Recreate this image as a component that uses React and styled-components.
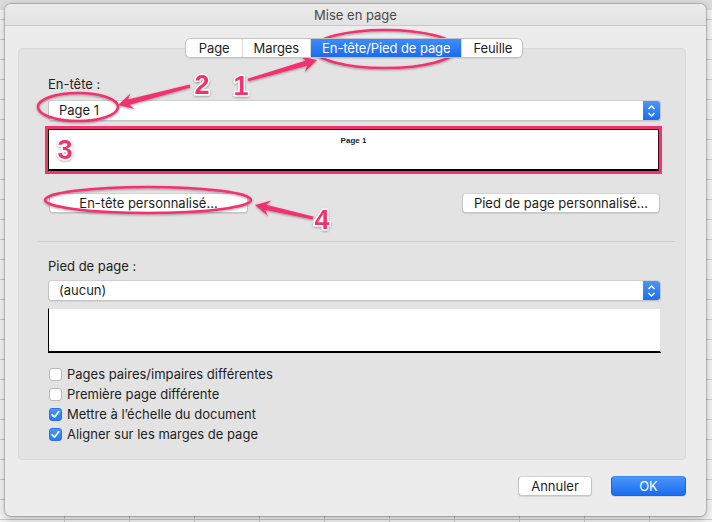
import React from "react";
import styled, { createGlobalStyle } from "styled-components";

const GlobalStyle = createGlobalStyle`
  html, body { margin: 0; padding: 0; }
  body {
    font-family: "Inter", "Liberation Sans", "Noto Sans", sans-serif;
    font-size: 13px;
    color: #1e1e1e;
  }
`;

const PINK = "#f2336e";

// arrow polygon from tail (x1,y1) to tip (x2,y2)
function arrowPoints(x1, y1, x2, y2) {
  const dx = x2 - x1;
  const dy = y2 - y1;
  const L = Math.hypot(dx, dy);
  const ux = dx / L, uy = dy / L;
  const nx = -uy, ny = ux;
  const hl = 15;
  const p = (a, b) => `${(x1 + ux * a + nx * b).toFixed(1)},${(y1 + uy * a + ny * b).toFixed(1)}`;
  return [
    p(0, 1.4),
    p(L - hl + 4, 2.8),
    p(L - hl, 8),
    p(L, 0),
    p(L - hl, -8),
    p(L - hl + 4, -2.8),
    p(0, -1.4),
  ].join(" ");
}

const ARROWS = [
  [248, 80, 317, 60],
  [190, 86, 118, 105],
  [313, 218, 255, 205],
];

const NUMBERS = [
  { n: "1", x: 241, y: 95 },
  { n: "2", x: 202, y: 94 },
  { n: "3", x: 65, y: 159 },
  { n: "4", x: 322, y: 229 },
];

const ELLIPSES = [
  { cx: 385, cy: 49, rx: 71, ry: 19 },
  { cx: 78, cy: 107, rx: 40, ry: 14 },
  { cx: 148, cy: 200, rx: 103, ry: 13 },
];

function Annotations() {
  return (
    <Overlay width="712" height="522" viewBox="0 0 712 522">
      <defs>
        <filter id="shadow" x="-20%" y="-20%" width="140%" height="140%">
          <feDropShadow dx="0" dy="1" stdDeviation="0.8" floodColor="#000" floodOpacity="0.35" />
        </filter>
      </defs>
      <g filter="url(#shadow)">
        {ELLIPSES.map((e, i) => (
          <ellipse key={i} {...e} fill="none" stroke={PINK} strokeWidth="2.6" />
        ))}
        {ARROWS.map((a, i) => (
          <polygon key={i} points={arrowPoints(...a)} fill={PINK} />
        ))}
        {NUMBERS.map(t => (
          <text
            key={t.n}
            x={t.x}
            y={t.y}
            textAnchor="middle"
            fontFamily="Liberation Sans, Arial, sans-serif"
            fontWeight="700"
            fontSize="27"
            fill={PINK}
            stroke="#fff"
            strokeWidth="3"
            paintOrder="stroke"
            strokeLinejoin="round"
          >
            {t.n}
          </text>
        ))}
      </g>
    </Overlay>
  );
}

function Stepper() {
  return (
    <StepBox>
      <svg width="9" height="14" viewBox="0 0 9 14">
        <path d="M1.5 5 L4.5 2 L7.5 5 M1.5 9 L4.5 12 L7.5 9" fill="none" stroke="#fff" strokeWidth="1.5" />
      </svg>
    </StepBox>
  );
}

function Select({ value }) {
  return (
    <SelectBox>
      <SelectValue>{value}</SelectValue>
      <Stepper />
    </SelectBox>
  );
}

function Check({ checked, label }) {
  return (
    <CheckRow>
      <Box checked={checked}>
        {checked && (
          <svg width="11" height="11" viewBox="0 0 11 11">
            <path d="M2.2 5.8 L4.5 8.2 L8.8 2.6" fill="none" stroke="#fff" strokeWidth="1.7" strokeLinecap="round" strokeLinejoin="round" />
          </svg>
        )}
      </Box>
      <span>{label}</span>
    </CheckRow>
  );
}

export default function App() {
  const tabs = ["Page", "Marges", "En-tête/Pied de page", "Feuille"];
  const options = [
    { label: "Pages paires/impaires différentes", checked: false },
    { label: "Première page différente", checked: false },
    { label: "Mettre à l’échelle du document", checked: true },
    { label: "Aligner sur les marges de page", checked: true },
  ];

  return (
    <>
      <GlobalStyle />
      <Page>
        <Dialog>
          <TitleBar>Mise en page</TitleBar>
          <Content>
            <Tabs>
              {tabs.map(t => (
                <Tab key={t} active={t === "En-tête/Pied de page"}>{t}</Tab>
              ))}
            </Tabs>
            <Panel>
              <Label>En-tête :</Label>
              <Field $top={8}>
                <Select value="Page 1" />
              </Field>
              <Preview $top={8} highlighted>
                <PreviewText>Page 1</PreviewText>
              </Preview>
              <ButtonRow>
                <PushButton $width={199}>En-tête personnalisé...</PushButton>
                <PushButton $width={198}>Pied de page personnalisé...</PushButton>
              </ButtonRow>
              <Separator />
              <Label $top={16}>Pied de page :</Label>
              <Field $top={6}>
                <Select value="(aucun)" />
              </Field>
              <Preview $top={7} />
              <CheckList>
                {options.map(o => (
                  <Check key={o.label} {...o} />
                ))}
              </CheckList>
            </Panel>
            <Footer>
              <PushButton $width={74}>Annuler</PushButton>
              <PushButton $width={75} primary>OK</PushButton>
            </Footer>
          </Content>
        </Dialog>
        <Annotations />
      </Page>
    </>
  );
}

const Page = styled.div`
  position: relative;
  width: 712px;
  height: 522px;
  box-sizing: border-box;
  padding: 4px 6px 6px 5px;
  overflow: hidden;
  background-color: #f4f4f4;
  background-image:
    linear-gradient(to bottom, #dcdcdc 0, #dcdcdc 10px, transparent 10px),
    repeating-linear-gradient(to right, transparent 0, transparent 64px, #c9c9c9 64px, #c9c9c9 65px),
    repeating-linear-gradient(to bottom, transparent 0, transparent 19px, #c9c9c9 19px, #c9c9c9 20px);
`;

const Overlay = styled.svg`
  position: absolute;
  top: 0;
  left: 0;
  pointer-events: none;
`;

const Dialog = styled.div`
  width: 701px;
  height: 512px;
  background: #ececec;
  border-radius: 6px;
  box-shadow: 0 0 0 1px rgba(0, 0, 0, 0.18), 0 3px 10px rgba(0, 0, 0, 0.25);
  overflow: hidden;
  display: flex;
  flex-direction: column;
`;

const TitleBar = styled.div`
  height: 21px;
  line-height: 22px;
  text-align: center;
  color: #4b4b4b;
  background: linear-gradient(#ebebeb, #e2e2e2);
  border-bottom: 1px solid #c8c8c8;
  flex-shrink: 0;
`;

const Content = styled.div`
  display: flex;
  flex-direction: column;
  padding: 0 20px 0 13px;
`;

const Tabs = styled.div`
  position: relative;
  z-index: 1;
  align-self: center;
  display: flex;
  height: 20px;
  margin: 12px 0 0 0;
  transform: translateX(2px);
  border: 1px solid #c4c4c4;
  border-radius: 5px;
  background: #fff;
  box-sizing: border-box;
  overflow: hidden;
  box-shadow: 0 1px 1px rgba(0, 0, 0, 0.08);
`;

const Tab = styled.div`
  padding: 0 11px;
  line-height: 18px;
  letter-spacing: -0.1px;
  color: ${({ active }) => (active ? "#fff" : "#1e1e1e")};
  background: ${({ active }) => (active ? "linear-gradient(#3f8cf8, #1a6cf0)" : "transparent")};
  border-left: 1px solid #dadada;
  &:first-child { border-left: 0; padding: 0 12px 0 13px; }
  &:last-child { padding: 0 10px 0 11px; }
`;

const Panel = styled.div`
  margin-top: -10px;
  height: 412px;
  box-sizing: border-box;
  padding: 27px 24px 14px 29px;
  background: #e3e3e3;
  border: 1px solid #dadada;
  border-radius: 4px;
  display: flex;
  flex-direction: column;
  & > * { flex-shrink: 0; }
`;

const Label = styled.div`
  line-height: 16px;
  margin-top: ${({ $top }) => $top || 0}px;
`;

const Field = styled.div`
  margin-top: ${({ $top }) => $top}px;
`;

const SelectBox = styled.div`
  height: 21px;
  box-sizing: border-box;
  display: flex;
  align-items: stretch;
  background: #fff;
  border: 1px solid #c3c3c3;
  border-top-color: #d0d0d0;
  border-radius: 4px;
  overflow: hidden;
  box-shadow: 0 1px 0 rgba(0, 0, 0, 0.06);
`;

const SelectValue = styled.div`
  flex: 1;
  padding-left: 10px;
  line-height: 19px;
`;

const StepBox = styled.div`
  width: 17px;
  display: flex;
  align-items: center;
  justify-content: center;
  background: linear-gradient(#4b96f9, #1b6ff1);
`;

const Preview = styled.div`
  margin-top: ${({ $top }) => $top}px;
  height: ${({ highlighted }) => (highlighted ? 42 : 45)}px;
  box-sizing: border-box;
  background: #fff;
  border-left: 1px solid #000;
  border-top: 1px solid ${({ highlighted }) => (highlighted ? "#3a0a1a" : "#e3e3e3")};
  border-right: 1px solid ${({ highlighted }) => (highlighted ? "#3a0a1a" : "#e3e3e3")};
  border-bottom: 2px solid #000;
  box-shadow: ${({ highlighted }) => (highlighted ? `0 0 0 3px ${PINK}` : "none")};
  margin-right: ${({ highlighted }) => (highlighted ? 2 : 0)}px;
  display: flex;
  justify-content: center;
`;

const PreviewText = styled.div`
  font-family: "Liberation Sans", Arial, sans-serif;
  font-size: 8px;
  font-weight: 700;
  color: #222;
  margin-top: 6px;
`;

const ButtonRow = styled.div`
  margin-top: 22px;
  display: flex;
  justify-content: space-between;
  padding-left: 1px;
  padding-right: 1px;
`;

const PushButton = styled.div`
  width: ${({ $width }) => $width}px;
  height: 20px;
  box-sizing: border-box;
  text-align: center;
  line-height: 18px;
  border-radius: 4px;
  color: ${({ primary }) => (primary ? "#fff" : "#1e1e1e")};
  background: ${({ primary }) => (primary ? "linear-gradient(#4b96f9, #1a6cf0)" : "#fff")};
  border: 1px solid ${({ primary }) => (primary ? "#1a66e0" : "#c5c5c5")};
  border-top-color: ${({ primary }) => (primary ? "#3f8af5" : "#d2d2d2")};
  box-shadow: 0 1px 1px rgba(0, 0, 0, 0.1);
`;

const Separator = styled.div`
  margin: 28px -14px 0 -10px;
  height: 1px;
  background: #cfcfcf;
`;

const CheckList = styled.div`
  margin-top: 11px;
  display: flex;
  flex-direction: column;
`;

const CheckRow = styled.div`
  height: 20px;
  display: flex;
  align-items: center;
  gap: 5px;
  padding-left: 1px;
`;

const Box = styled.div`
  width: 13px;
  height: 13px;
  box-sizing: border-box;
  border-radius: 3px;
  display: flex;
  align-items: center;
  justify-content: center;
  background: ${({ checked }) => (checked ? "linear-gradient(#4b96f9, #2a78f3)" : "#fff")};
  border: 1px solid ${({ checked }) => (checked ? "#2a72e8" : "#b9b9b9")};
`;

const Footer = styled.div`
  display: flex;
  justify-content: flex-end;
  gap: 19px;
  margin-top: 16px;
`;
